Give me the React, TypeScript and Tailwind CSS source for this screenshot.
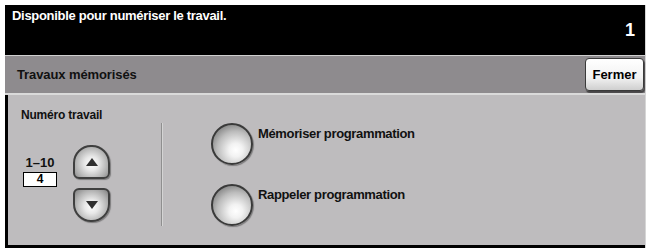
import React from 'react';

function RoundButton() {
  return (
    <div className="h-[42px] w-[42px] shrink-0 rounded-full border-[2px] border-[#3a3a3a] bg-[radial-gradient(circle_at_60%_66%,#ffffff_0%,#f2f2f2_20%,#bcbcbc_55%,#858585_80%,#5e5e5e_100%)] shadow-[1px_1px_1px_rgba(0,0,0,0.35)]" />
  );
}

function Arrow({ dir }: { dir: 'up' | 'down' }) {
  const up = dir === 'up';
  return (
    <div
      className={
        'flex h-[34px] w-[37px] items-center justify-center border-[2px] border-[#3f3f3f] bg-[radial-gradient(circle_at_50%_55%,#ffffff_0%,#e8e8e8_30%,#b0b0b0_70%,#808080_100%)] shadow-[1px_1px_1px_rgba(0,0,0,0.35)] ' +
        (up ? 'rounded-t-[18px] rounded-b-[6px]' : 'rounded-b-[18px] rounded-t-[6px]')
      }
    >
      <svg width="12" height="8" viewBox="0 0 12 8" className={up ? '' : 'rotate-180'}>
        <path d="M6 0 L12 8 L0 8 Z" fill="#2f2f2f" />
      </svg>
    </div>
  );
}

export default function App() {
  return (
    <div
      className="h-[251px] w-[651px] bg-white pl-[5px] pr-[5px] pt-[5px] pb-[3px]"
      style={{ fontFamily: '"Liberation Sans", Arial, sans-serif' }}
    >
      <div className="flex h-full flex-col border-r border-[#d6d6d6]">
        {/* status bar */}
        <div className="flex h-[50px] justify-between bg-black pl-[7px] pr-[10px]">
          <span className="pt-[3px] text-[13px] font-bold leading-[15px] tracking-[-0.3px] text-white">
            Disponible pour numériser le travail.
          </span>
          <span className="pt-[15px] text-[18px] font-bold leading-[20px] text-white">1</span>
        </div>
        <div className="h-px bg-[#cfcfcf]" />

        {/* title bar */}
        <div className="flex h-[37px] items-center justify-between bg-[#8e8b8e] pl-[12px] pr-[1px]">
          <span className="text-[13px] font-bold leading-[15px] tracking-[-0.1px] text-[#111]">
            Travaux mémorisés
          </span>
          <button className="flex h-[33px] w-[59px] items-center justify-center rounded-[4px] border border-[#3a3a3a] bg-[linear-gradient(#ffffff,#f2f2f2_60%,#cfcfcf)] text-[13px] font-bold text-black shadow-[1px_2px_1px_rgba(0,0,0,0.5)]">
            Fermer
          </button>
        </div>
        <div className="h-[2px] bg-[#dadada]" />

        {/* body */}
        <div className="flex flex-1 border-b-[3px] border-l-[3px] border-black bg-[#bebcbe]">
          <div className="w-[153px] shrink-0 pl-[13px] pt-[13px]">
            <div className="text-[12px] font-bold leading-[15px] tracking-[-0.2px] text-[#111]">
              Numéro travail
            </div>
            <div className="mt-[22px] flex gap-[16px] pl-[2px]">
              <div className="flex flex-col items-center pt-[11px]">
                <span className="text-[13px] font-bold leading-[14px] text-[#111]">1–10</span>
                <div className="mt-[2px] flex h-[15px] w-[34px] items-center justify-center border border-black bg-white text-[12px] font-bold leading-[13px] text-black">
                  4
                </div>
              </div>
              <div className="flex flex-col gap-[9px]">
                <Arrow dir="up" />
                <Arrow dir="down" />
              </div>
            </div>
          </div>

          <div className="mt-[28px] flex h-[103px]">
            <div className="w-px bg-[#8f8f8f]" />
            <div className="w-px bg-[#d4d4d4]" />
          </div>

          <div className="flex flex-col gap-[19px] pl-[48px] pt-[28px]">
            <div className="flex items-start gap-[5px]">
              <RoundButton />
              <span className="pt-[3px] text-[13px] font-bold leading-[15px] tracking-[-0.35px] text-[#111]">
                Mémoriser programmation
              </span>
            </div>
            <div className="flex items-start gap-[5px]">
              <RoundButton />
              <span className="pt-[3px] text-[13px] font-bold leading-[15px] tracking-[-0.35px] text-[#111]">
                Rappeler programmation
              </span>
            </div>
          </div>
        </div>
      </div>
    </div>
  );
}
